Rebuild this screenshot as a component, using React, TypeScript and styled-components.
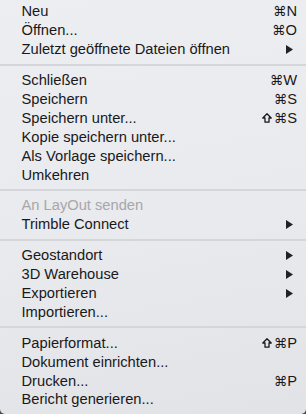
import React from "react";
import styled, { createGlobalStyle } from "styled-components";

const GlobalStyle = createGlobalStyle`
  html, body {
    margin: 0;
    padding: 0;
    background: #4a4a4c;
  }
`;

const Menu = styled.div`
  width: 306px;
  height: 414px;
  box-sizing: border-box;
  padding-top: 2px;
  background: linear-gradient(170deg, #edeef1 0%, #e9eaed 55%, #e2e3e6 100%);
  border-radius: 0 0 5px 5px;
  overflow: hidden;
  font-family: "Liberation Sans", Arial, "DejaVu Sans", sans-serif;
  font-size: 14.7px;
  color: #19191b;
`;

const Row = styled.div<{ $disabled?: boolean }>`
  height: 18.9px;
  display: flex;
  align-items: center;
  padding: 0 9px 0 21.5px;
  color: ${(p) => (p.$disabled ? "#a6a7aa" : "inherit")};
`;

const Label = styled.span`
  flex: 1;
  white-space: nowrap;
`;

const Shortcut = styled.span`
  display: flex;
  align-items: center;
`;

const Cmd = styled.span`
  font-family: "DejaVu Sans", sans-serif;
  font-size: 13.5px;
`;

const ShiftIcon = styled.svg`
  width: 10px;
  height: 10px;
  margin-right: 2px;
  fill: none;
  stroke: #19191b;
  stroke-width: 1.3;
  stroke-linejoin: round;
`;

const Arrow = styled.svg`
  width: 7px;
  height: 9px;
  margin-right: 4px;
  fill: #222224;
`;

const Separator = styled.div`
  height: 12px;
  display: flex;
  align-items: center;

  &::after {
    content: "";
    flex: 1;
    height: 2px;
    background: #d5d6d9;
  }
`;

type Item =
  | { sep: true }
  | { label: string; key?: string; shift?: boolean; sub?: boolean; disabled?: boolean };

const items: Item[] = [
  { label: "Neu", key: "N" },
  { label: "Öffnen...", key: "O" },
  { label: "Zuletzt geöffnete Dateien öffnen", sub: true },
  { sep: true },
  { label: "Schließen", key: "W" },
  { label: "Speichern", key: "S" },
  { label: "Speichern unter...", key: "S", shift: true },
  { label: "Kopie speichern unter..." },
  { label: "Als Vorlage speichern..." },
  { label: "Umkehren" },
  { sep: true },
  { label: "An LayOut senden", disabled: true },
  { label: "Trimble Connect", sub: true },
  { sep: true },
  { label: "Geostandort", sub: true },
  { label: "3D Warehouse", sub: true },
  { label: "Exportieren", sub: true },
  { label: "Importieren..." },
  { sep: true },
  { label: "Papierformat...", key: "P", shift: true },
  { label: "Dokument einrichten..." },
  { label: "Drucken...", key: "P" },
  { label: "Bericht generieren..." },
];

export default function App() {
  return (
    <>
      <GlobalStyle />
      <Menu>
        {items.map((it, i) =>
          "sep" in it ? (
            <Separator key={i} />
          ) : (
            <Row key={i} $disabled={it.disabled}>
              <Label>{it.label}</Label>
              {it.key && (
                <Shortcut>
                  {it.shift && (
                    <ShiftIcon viewBox="0 0 10 10">
                      <path d="M5 0.8 L9.2 5 H7 V9.2 H3 V5 H0.8 Z" />
                    </ShiftIcon>
                  )}
                  <Cmd>⌘</Cmd>
                  <span>{it.key}</span>
                </Shortcut>
              )}
              {it.sub && (
                <Arrow viewBox="0 0 7 9">
                  <polygon points="0,0 7,4.5 0,9" />
                </Arrow>
              )}
            </Row>
          )
        )}
      </Menu>
    </>
  );
}
